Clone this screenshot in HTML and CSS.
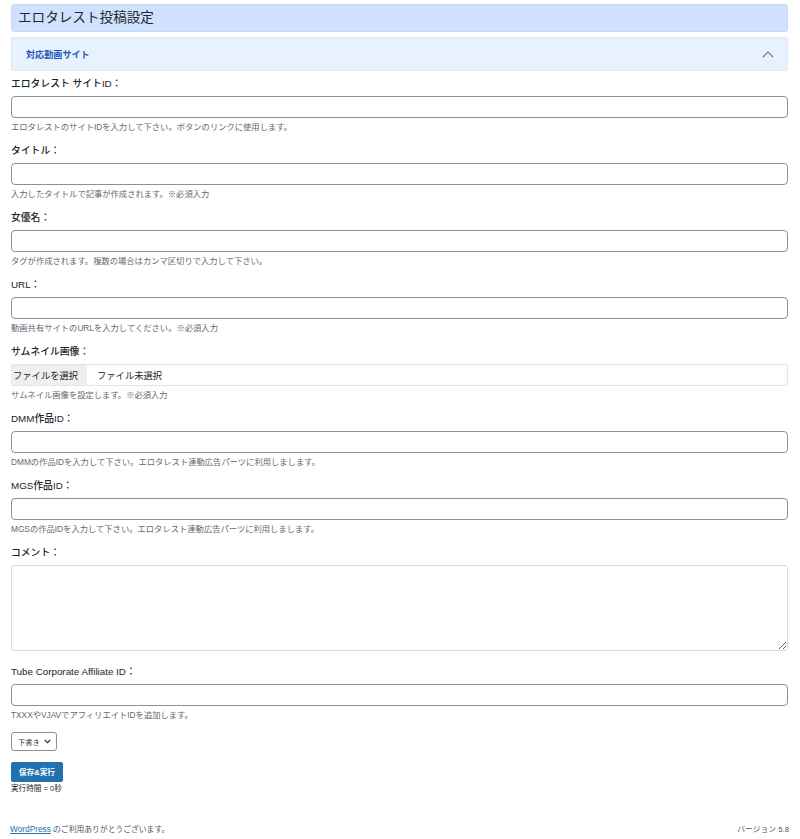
FILE: index.html
```html
<!DOCTYPE html>
<html lang="ja">
<head>
<meta charset="utf-8">
<title>エロタレスト投稿設定</title>
<link rel="stylesheet" href="styles.css">
</head>
<body>
<div class="wrap">
  <h1 class="page-title">エロタレスト投稿設定</h1>
  <div class="accordion">
    <span class="accordion-title">対応動画サイト</span>
    <svg class="chevron" width="12" height="7" viewBox="0 0 12 7"><path d="M1 6 L6 1 L11 6" fill="none" stroke="#6a7896" stroke-width="1.2"/></svg>
  </div>

  <div class="field">
    <label class="label">エロタレスト サイトID：</label>
    <div class="input"></div>
    <p class="help">エロタレストのサイトIDを入力して下さい。ボタンのリンクに使用します。</p>
  </div>
  <div class="field">
    <label class="label">タイトル：</label>
    <div class="input"></div>
    <p class="help">入力したタイトルで記事が作成されます。※必須入力</p>
  </div>
  <div class="field">
    <label class="label">女優名：</label>
    <div class="input"></div>
    <p class="help">タグが作成されます。複数の場合はカンマ区切りで入力して下さい。</p>
  </div>
  <div class="field">
    <label class="label">URL：</label>
    <div class="input"></div>
    <p class="help">動画共有サイトのURLを入力してください。※必須入力</p>
  </div>
  <div class="field">
    <label class="label">サムネイル画像：</label>
    <div class="file">
      <span class="file-btn">ファイルを選択</span>
      <span class="file-name">ファイル未選択</span>
    </div>
    <p class="help">サムネイル画像を設定します。※必須入力</p>
  </div>
  <div class="field">
    <label class="label">DMM作品ID：</label>
    <div class="input"></div>
    <p class="help">DMMの作品IDを入力して下さい。エロタレスト連動広告パーツに利用しまします。</p>
  </div>
  <div class="field">
    <label class="label">MGS作品ID：</label>
    <div class="input"></div>
    <p class="help">MGSの作品IDを入力して下さい。エロタレスト連動広告パーツに利用しまします。</p>
  </div>
  <div class="field field-textarea">
    <label class="label">コメント：</label>
    <textarea class="textarea"></textarea>
  </div>
  <div class="field">
    <label class="label">Tube Corporate Affiliate ID：</label>
    <div class="input"></div>
    <p class="help">TXXXやVJAVでアフィリエイトIDを追加します。</p>
  </div>

  <div class="select">
    <span>下書き</span>
    <svg width="7" height="5" viewBox="0 0 7 5"><path d="M0.8 1 L3.5 3.8 L6.2 1" fill="none" stroke="#1d2327" stroke-width="1.1"/></svg>
  </div>

  <div class="actions">
    <span class="button">保存&amp;実行</span>
    <p class="exec">実行時間 = 0秒</p>
  </div>
</div>

<footer class="footer">
  <p class="thanks"><a href="#">WordPress</a> のご利用ありがとうございます。</p>
  <p class="version">バージョン 5.8</p>
</footer>
</body>
</html>
```

FILE: styles.css
```css
* { box-sizing: border-box; }

html, body {
  margin: 0;
  padding: 0;
  background: #ffffff;
}

body {
  font-family: "Liberation Sans", "Noto Sans CJK JP", sans-serif;
  color: #1d2327;
  width: 800px;
  height: 839px;
  position: relative;
  overflow: hidden;
}

.wrap {
  padding: 4px 12px 0 11px;
}

.page-title {
  margin: 0;
  height: 28px;
  line-height: 26px;
  padding-left: 6px;
  font-size: 13.6px;
  font-weight: 400;
  color: #23282d;
  background: #d0e1fd;
  border: 1px solid #c7d9f7;
  border-radius: 3px;
}

.accordion {
  margin-top: 5px;
  height: 34px;
  display: flex;
  align-items: center;
  justify-content: space-between;
  padding: 0 13px 0 14px;
  background: #e8f1fe;
  border: 1px solid #dde7f6;
  border-radius: 2px;
}

.accordion-title {
  font-size: 9.1px;
  font-weight: 700;
  color: #2358b5;
}

.chevron { display: block; }

.field {
  margin-top: 6px;
  margin-bottom: 11px;
}

.field + .field { margin-top: 0; }

.label {
  display: block;
  font-size: 9.8px;
  font-weight: 500;
  line-height: 14px;
  color: #1d2327;
  margin-bottom: 5px;
}

.input {
  height: 22px;
  border: 1px solid #8c8f94;
  border-radius: 4px;
  background: #fff;
}

.help {
  margin: 3px 0 0;
  font-size: 8.3px;
  line-height: 12px;
  color: #646970;
}

.file {
  height: 22px;
  display: flex;
  align-items: stretch;
  border: 1px solid #e2e4e7;
  border-radius: 2px;
  font-size: 9.3px;
}

.file-btn {
  display: flex;
  align-items: center;
  padding: 0 8px 0 1px;
  width: 75px;
  background: #efeff0;
  color: #1d2327;
}

.file-name {
  display: flex;
  align-items: center;
  padding-left: 10px;
  color: #1d2327;
}

.field-textarea { margin-bottom: 14px; }

.textarea {
  display: block;
  width: 100%;
  height: 86px;
  margin: 0;
  padding: 0;
  border: 1px solid #dcdcde;
  border-radius: 3px;
  background: #fff;
  font: inherit;
}

.select {
  margin-top: 10px;
  width: 46px;
  height: 19px;
  display: flex;
  align-items: center;
  justify-content: space-between;
  padding: 0 5px 0 6px;
  border: 1px solid #8c8f94;
  border-radius: 3px;
  font-size: 7.2px;
  color: #2c3338;
}

.select svg { display: block; }

.actions { margin-top: 10px; }

.button {
  display: inline-flex;
  align-items: center;
  justify-content: center;
  width: 52px;
  height: 20px;
  background: #2271b1;
  border-radius: 2px;
  color: #fff;
  font-size: 7.6px;
  font-weight: 700;
}

.exec {
  margin: 1px 0 0;
  font-size: 7.6px;
  line-height: 11px;
  color: #1d2327;
}

.footer {
  position: absolute;
  left: 0;
  right: 0;
  bottom: 3px;
  display: flex;
  justify-content: space-between;
  align-items: center;
  padding: 0 11px 0 10px;
  font-size: 7.8px;
  color: #50575e;
}

.footer p { margin: 0; line-height: 12px; }

.footer a {
  color: #2271b1;
  text-decoration: underline;
  font-size: 8.3px;
}
```
